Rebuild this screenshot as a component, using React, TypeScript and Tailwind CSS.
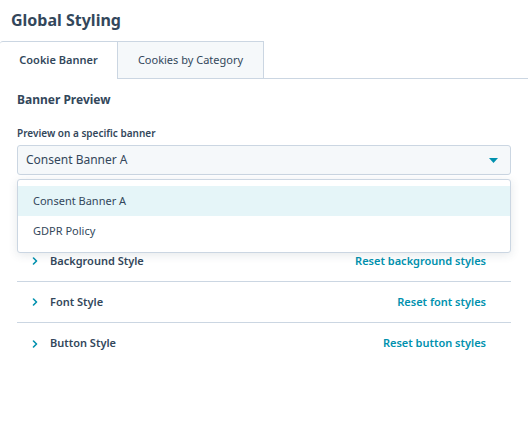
import React from 'react';

const font = { fontFamily: '"Noto Sans", "Liberation Sans", sans-serif' };

function Chevron() {
  return (
    <svg width="6" height="8" viewBox="0 0 6 8" className="shrink-0">
      <path d="M1.5 1 L4.5 4 L1.5 7" fill="none" stroke="#0091ae" strokeWidth="1.6" strokeLinecap="round" strokeLinejoin="round" />
    </svg>
  );
}

function Row({ label, reset, last }: { label: string; reset: string; last?: boolean }) {
  return (
    <div className={last ? 'flex h-[41px] items-center' : 'flex h-[41px] items-center border-b border-[#cbd6e2]'}>
      <div className="ml-[15px] flex w-[18px] items-center">
        <Chevron />
      </div>
      <span className="text-[11px] font-semibold text-[#33475b]">{label}</span>
      <span className="ml-auto mr-[25px] text-[11px] font-semibold text-[#0091ae]">{reset}</span>
    </div>
  );
}

export default function App() {
  return (
    <div className="h-[422px] w-[528px] bg-white text-[#33475b]" style={font}>
      <h1 className="px-[11px] pt-[9px] text-[16px] font-bold leading-[22px]">Global Styling</h1>

      <div className="mt-[10px] flex h-[38px]">
        <div className="flex w-[118px] items-center justify-center rounded-tl-[3px] border-t border-r border-[#cbd6e2] bg-white text-[11px] font-semibold">
          Cookie Banner
        </div>
        <div className="flex w-[146px] items-center justify-center border-t border-r border-b border-[#cbd6e2] bg-[#f5f8fa] text-[11px]">
          Cookies by Category
        </div>
        <div className="flex-1 border-b border-[#cbd6e2]" />
      </div>

      <div className="px-[17px]">
        <h2 className="mt-[13px] text-[12px] font-bold leading-[16px]">Banner Preview</h2>

        <label className="mt-[18px] block text-[10px] font-semibold leading-[14px]">Preview on a specific banner</label>

        <div className="relative mt-[5px]">
          <div className="flex h-[30px] items-center rounded-[3px] border border-[#cbd6e2] bg-[#f5f8fa] pl-[8px] pr-[12px]">
            <span className="text-[12px]">Consent Banner A</span>
            <svg width="9" height="5" viewBox="0 0 9 5" className="ml-auto">
              <path d="M0 0 H9 L4.5 5 Z" fill="#0091ae" />
            </svg>
          </div>

          <div className="absolute left-0 right-0 top-[34px] z-10 rounded-[3px] border border-[#cbd6e2] bg-white py-[6px] shadow-[0_2px_10px_rgba(45,62,80,0.12)]">
            <div className="flex h-[30px] items-center bg-[#e5f5f8] pl-[15px] text-[11px]">Consent Banner A</div>
            <div className="flex h-[30px] items-center pl-[15px] text-[11px]">GDPR Policy</div>
          </div>
        </div>

        <div className="mt-[66px]">
          <Row label="Background Style" reset="Reset background styles" />
          <Row label="Font Style" reset="Reset font styles" />
          <Row label="Button Style" reset="Reset button styles" last />
        </div>
      </div>
    </div>
  );
}
